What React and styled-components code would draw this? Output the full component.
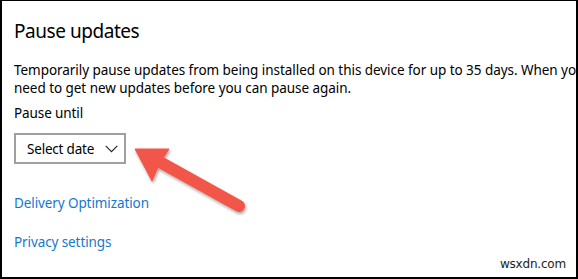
import React from "react";
import styled, { createGlobalStyle } from "styled-components";

const GlobalStyle = createGlobalStyle`
  html, body {
    margin: 0;
    padding: 0;
    background: #ffffff;
  }
`;

function App() {
  return (
    <>
      <GlobalStyle />
      <Frame>
        <Title>Pause updates</Title>
        <Description>
          Temporarily pause updates from being installed on this device for up to 35 days. When you
          <br />
          need to get new updates before you can pause again.
        </Description>
        <Label>Pause until</Label>
        <DateSelect>
          <span>Select date</span>
          <svg width="13" height="8" viewBox="0 0 13 8">
            <path d="M0.7 0.8 L6.5 6.6 L12.3 0.8" fill="none" stroke="#222" strokeWidth="1.1" />
          </svg>
        </DateSelect>
        <Links>
          <Link>Delivery Optimization</Link>
          <Link>Privacy settings</Link>
        </Links>
        <Arrow viewBox="0 0 578 279" width="578" height="279">
          <defs>
            <filter id="shadow" x="-20%" y="-20%" width="140%" height="140%">
              <feDropShadow dx="1" dy="2" stdDeviation="1.6" floodColor="#000" floodOpacity="0.35" />
            </filter>
          </defs>
          <g filter="url(#shadow)" fill="#f2574a" stroke="#f2574a">
            <line x1="158" y1="161" x2="239" y2="206" strokeWidth="12" strokeLinecap="round" />
            <polygon points="135,149 169,149 160,163 152,181" strokeWidth="1" strokeLinejoin="round" />
          </g>
        </Arrow>
        <Watermark>wsxdn.com</Watermark>
      </Frame>
    </>
  );
}

export default App;

const Frame = styled.div`
  position: relative;
  box-sizing: border-box;
  width: 578px;
  height: 279px;
  overflow: hidden;
  border: 2px solid #000;
  border-top-width: 1px;
  padding: 0 0 0 12px;
  font-family: "Noto Sans", "Open Sans", sans-serif;
  color: #000;
`;

const Title = styled.div`
  margin-top: 17px;
  font-size: 19px;
  line-height: 26px;
  letter-spacing: -0.45px;
`;

const Description = styled.div`
  margin-top: 17px;
  white-space: nowrap;
  font-size: 13.5px;
  line-height: 18px;
  letter-spacing: -0.05px;
`;

const Label = styled.div`
  margin-top: 7px;
  font-size: 13.5px;
  line-height: 18px;
  letter-spacing: -0.1px;
`;

const DateSelect = styled.div`
  margin-top: 11px;
  box-sizing: border-box;
  width: 112px;
  height: 31px;
  border: 2px solid #a0a0a0;
  display: flex;
  align-items: center;
  gap: 11px;
  padding-left: 11px;
  font-size: 13.5px;
  letter-spacing: -0.2px;

  svg {
    margin-top: 1px;
  }
`;

const Links = styled.div`
  display: flex;
  flex-direction: column;
  gap: 20px;
  margin-top: 30px;
`;

const Link = styled.div`
  font-size: 13.5px;
  line-height: 19px;
  letter-spacing: -0.1px;
  color: #1478cf;
`;

const Arrow = styled.svg`
  position: absolute;
  left: -2px;
  top: -1px;
  pointer-events: none;
`;

const Watermark = styled.div`
  position: absolute;
  right: 10px;
  bottom: 6px;
  font-family: "DejaVu Sans", sans-serif;
  font-size: 12px;
  color: #222;
  letter-spacing: -0.2px;
`;
